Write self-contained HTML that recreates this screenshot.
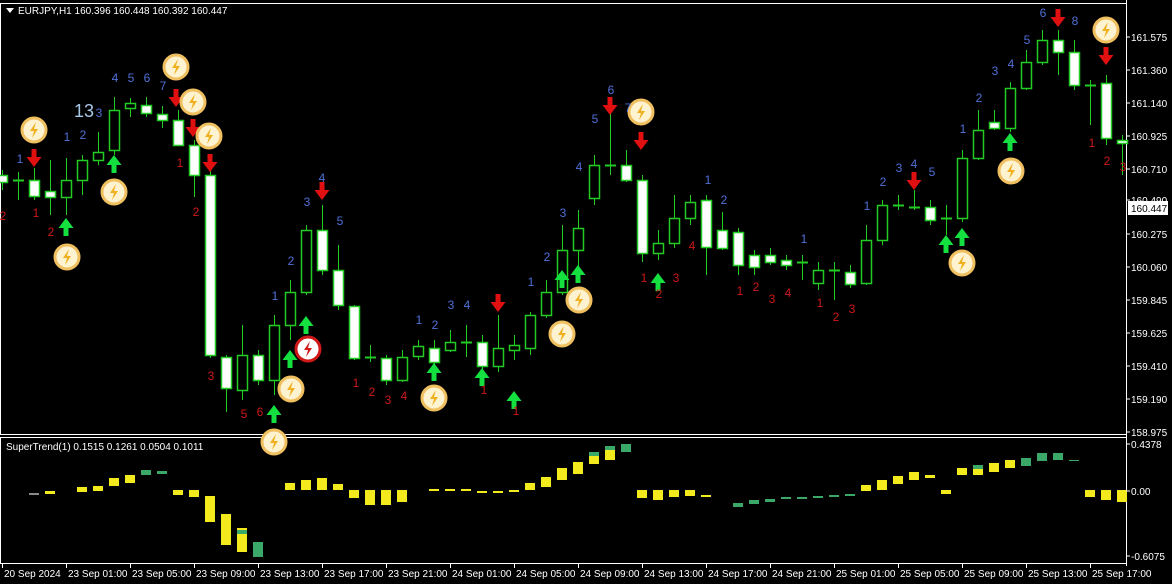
<!DOCTYPE html><html><head><meta charset="utf-8"><style>
body{margin:0;background:#000;width:1172px;height:584px;overflow:hidden}
svg{display:block}
text{font-family:"Liberation Sans",sans-serif}
</style></head><body>
<svg id="s" width="1172" height="584" xmlns="http://www.w3.org/2000/svg"></svg>
<script>
const S=document.getElementById('s');let h='';
const G='#22cc22';
h+='<rect x="0.5" y="3.5" width="1126" height="431" fill="none" stroke="#fff"/>';
h+='<rect x="0.5" y="437.5" width="1126" height="126" fill="none" stroke="#fff"/>';
h+='<line x1="1126.5" y1="0" x2="1126.5" y2="566" stroke="#fff"/>';
h+='<line x1="0" y1="563.5" x2="1126" y2="563.5" stroke="#fff"/>';
const C=[[175,182,170,190,1],[180,180,172,200,2],[180,196,168,200,1],[191,197,160,215,1],[180,197,158,215,0],[160,180,155,195,0],[152,160,132,165,0],[110,150,97,155,0],[103,108,98,117,0],[105,113,97,117,1],[114,120,106,128,1],[120,145,110,146,1],[145,175,140,197,1],[175,355,168,358,1],[357,388,355,412,1],[355,390,325,400,0],[355,380,350,385,1],[325,380,315,395,0],[292,325,280,340,0],[230,292,225,295,0],[230,270,205,275,1],[270,305,245,310,1],[306,358,305,360,1],[357,357,345,362,2],[358,380,355,385,1],[357,380,350,382,0],[346,356,340,360,0],[348,362,340,365,1],[342,350,330,352,0],[342,342,325,357,2],[342,366,335,372,1],[348,366,315,372,0],[345,350,335,360,0],[315,348,312,355,0],[292,315,280,318,0],[250,292,225,295,0],[228,250,210,270,0],[165,198,155,205,0],[165,165,110,175,2],[165,180,150,182,1],[180,253,175,262,1],[243,253,230,260,0],[218,243,195,248,0],[202,218,195,225,0],[200,247,195,275,1],[230,248,212,250,1],[232,265,228,275,1],[255,267,250,275,1],[255,262,248,265,1],[260,265,255,270,1],[262,262,255,280,2],[270,283,262,290,0],[270,270,262,300,2],[272,284,265,288,1],[240,283,225,285,0],[205,240,200,245,0],[205,205,195,210,2],[207,207,190,210,2],[207,220,200,225,1],[218,218,205,235,2],[158,218,150,222,0],[130,158,110,160,0],[122,128,110,130,1],[88,128,82,132,0],[62,88,50,90,0],[40,62,30,65,0],[40,52,30,75,1],[52,85,40,90,1],[85,85,80,125,2],[83,138,75,145,1],[140,143,135,175,1]];
C.forEach((c,i)=>{const x=2+16*i;h+=`<line x1="${x+.5}" y1="${c[2]}" x2="${x+.5}" y2="${c[3]}" stroke="${G}"/>`;
if(c[4]==2)h+=`<line x1="${x-5}" y1="${c[0]+.5}" x2="${x+6}" y2="${c[0]+.5}" stroke="${G}" stroke-width="2"/>`;
else h+=`<rect x="${x-4.5}" y="${c[0]+.5}" width="10" height="${Math.max(c[1]-c[0],3)}" fill="${c[4]?'#fff':'#000'}" stroke="${G}" stroke-width="1.5"/>`;});
const B=[[34,493,495,'#888'],[50,491,494,'y'],[82,487,492,'y'],[98,486,491,'y'],[114,478,486,'y'],[130,475,483,'y'],[146,470,475,'g'],[162,471,474,'g'],[178,490,495,'y'],[194,490,497,'y'],[210,496,522,'y'],[226,514,545,'y'],[242,528,552,'y'],[258,542,557,'g'],[290,483,490,'y'],[306,480,490,'y'],[322,478,490,'y'],[338,484,490,'y'],[354,490,498,'y'],[370,490,505,'y'],[386,490,505,'y'],[402,490,502,'y'],[434,489,491,'y'],[450,489,491,'y'],[466,489,491,'y'],[482,491,493,'y'],[498,491,493,'y'],[514,490,492,'y'],[530,483,490,'y'],[546,477,487,'y'],[562,468,480,'y'],[578,462,474,'y'],[594,452,464,'y'],[610,446,460,'y'],[626,444,452,'g'],[642,490,498,'y'],[658,490,500,'y'],[674,490,497,'y'],[690,490,496,'y'],[706,495,497,'y'],[738,503,507,'g'],[754,500,504,'g'],[770,499,502,'g'],[786,497,499,'g'],[802,497,499,'g'],[818,496,498,'g'],[834,495,497,'g'],[850,494,496,'g'],[866,485,491,'y'],[882,480,490,'y'],[898,476,484,'y'],[914,472,480,'y'],[930,475,478,'y'],[946,490,494,'y'],[962,468,475,'y'],[978,465,475,'y'],[994,463,472,'y'],[1010,460,468,'y'],[1026,458,466,'g'],[1042,453,461,'g'],[1058,453,460,'g'],[1074,460,461,'g'],[1090,490,497,'y'],[1106,490,500,'y'],[1122,490,502,'y']];
B.forEach(b=>{const col=b[3]=='y'?'#f2ea1c':b[3]=='g'?'#3aa868':b[3];h+=`<rect x="${b[0]-5}" y="${b[1]}" width="10" height="${b[2]-b[1]}" fill="${col}"/>`;});
[[146,470],[242,530],[594,452],[610,446],[978,465]].forEach(p=>h+=`<rect x="${p[0]-5}" y="${p[1]}" width="10" height="4" fill="#3aa868"/>`);
const dn=(x,y)=>`<path d="M${x-2.5} ${y-11}h5v8h5l-7.5 10l-7.5-10h5z" fill="#e01010"/>`;
const up=(x,y)=>`<path d="M${x-2.5} ${y+11}h5v-8h5l-7.5-10l-7.5 10h5z" fill="#14e040"/>`;
[[34,160],[176,100],[193,130],[210,165],[322,193],[498,305],[610,108],[641,143],[914,183],[1058,20],[1106,58]].forEach(p=>h+=dn(...p));
[[66,225],[114,162],[274,412],[290,357],[306,323],[434,370],[482,375],[514,398],[562,277],[578,272],[658,280],[946,242],[962,235],[1010,140]].forEach(p=>h+=up(...p));
const coin=(x,y,r)=>`<circle cx="${x}" cy="${y}" r="12" fill="${r?'#fff':'#fdf3d0'}" stroke="${r?'#d01818':'#f0c060'}" stroke-width="3"/><path d="M${x+2} ${y-8}l-6 9h4l-2 7l6-9h-4z" fill="${r?'#d01818':'#f0b020'}"/>`;
[[34,130],[67,257],[114,192],[176,67],[193,102],[209,136],[274,442],[291,389],[434,398],[562,334],[579,300],[641,112],[962,263],[1011,171],[1106,30]].forEach(p=>h+=coin(...p));
h+=coin(308,349,1);
const bl=[[20,163,1],[67,141,1],[83,139,2],[99,117,3],[115,82,4],[131,82,5],[147,82,6],[163,90,7],[275,300,1],[291,265,2],[307,206,3],[322,182,4],[340,225,5],[419,324,1],[435,329,2],[451,309,3],[467,309,4],[531,286,1],[547,261,2],[563,217,3],[579,171,4],[595,123,5],[611,94,6],[628,112,7],[708,184,1],[724,204,2],[804,243,1],[867,210,1],[883,186,2],[899,172,3],[914,168,4],[932,176,5],[963,133,1],[979,102,2],[995,75,3],[1011,68,4],[1027,44,5],[1043,17,6],[1075,25,8]];
bl.forEach(n=>h+=`<text x="${n[0]}" y="${n[1]}" fill="#5070d8" font-size="12" text-anchor="middle">${n[2]}</text>`);
h+=`<text x="84" y="117" fill="#a8c8e8" font-size="18" text-anchor="middle">13</text>`;
const rd=[[3,220,2],[36,217,1],[51,236,2],[180,167,1],[196,216,2],[211,380,3],[244,418,5],[260,416,6],[356,387,1],[372,396,2],[388,404,3],[404,400,4],[484,394,1],[516,415,1],[644,282,1],[659,298,2],[676,282,3],[692,250,4],[740,295,1],[756,291,2],[772,303,3],[788,297,4],[820,307,1],[836,321,2],[852,313,3],[1092,147,1],[1107,165,2],[1123,171,3]];
rd.forEach(n=>h+=`<text x="${n[0]}" y="${n[1]}" fill="#d01818" font-size="12" text-anchor="middle">${n[2]}</text>`);
h+=`<path d="M6 8h8l-4 5z" fill="#fff"/><text x="18" y="14" fill="#fff" font-size="10">EURJPY,H1  160.396 160.448 160.392 160.447</text>`;
h+=`<text x="6" y="450" fill="#fff" font-size="10">SuperTrend(1) 0.1515 0.1261 0.0504 0.1011</text>`;
[[37,'161.575'],[70,'161.360'],[103,'161.140'],[136,'160.925'],[169,'160.710'],[200,'160.490'],[234,'160.275'],[267,'160.060'],[300,'159.845'],[333,'159.625'],[366,'159.410'],[399,'159.190'],[432,'158.975'],[444,'0.4378'],[491,'0.00'],[556,'-0.6075']].forEach(a=>h+=`<line x1="1126" y1="${a[0]}" x2="1130" y2="${a[0]}" stroke="#fff"/><text x="1131" y="${a[0]+4}" fill="#fff" font-size="10">${a[1]}</text>`);
h+=`<rect x="1128" y="201" width="40" height="14" fill="#fff"/><text x="1131" y="212" fill="#000" font-size="10">160.447</text>`;
const T=['20 Sep 2024','23 Sep 01:00','23 Sep 05:00','23 Sep 09:00','23 Sep 13:00','23 Sep 17:00','23 Sep 21:00','24 Sep 01:00','24 Sep 05:00','24 Sep 09:00','24 Sep 13:00','24 Sep 17:00','24 Sep 21:00','25 Sep 01:00','25 Sep 05:00','25 Sep 09:00','25 Sep 13:00','25 Sep 17:00'];
T.forEach((t,i)=>{const x=i==0?2:2+64*i;h+=`<line x1="${x+.5}" y1="564" x2="${x+.5}" y2="568" stroke="#fff"/><text x="${x+2}" y="577" fill="#fff" font-size="10">${t}</text>`;});
S.innerHTML=h;
</script></body></html>
